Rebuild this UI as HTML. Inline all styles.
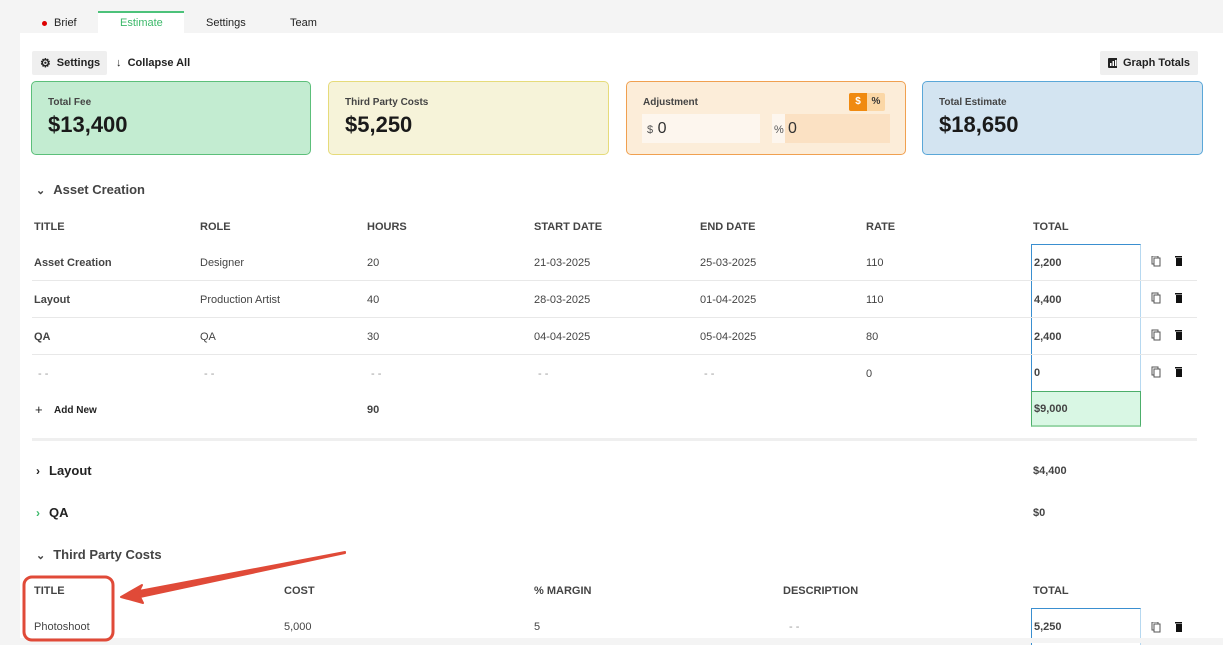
<!DOCTYPE html>
<html><head><meta charset="utf-8"><style>
*{margin:0;padding:0;box-sizing:border-box}
body{width:1223px;height:643px;background:#f4f4f4;font-family:"Liberation Sans",sans-serif;color:#333;position:relative;overflow:hidden}
.a{position:absolute;white-space:nowrap}
.main{position:absolute;left:20px;top:33px;width:1203px;height:605px;background:#fff}
.tab{position:absolute;top:17px;font-size:11px;color:#222}
.btn{position:absolute;background:#efefef;border-radius:2px;font-size:11px;font-weight:bold;color:#222;display:flex;align-items:center;gap:6px;padding:0 8px;white-space:nowrap}
.card{position:absolute;top:81px;height:74px;border-radius:5px;border:1px solid}
.card .l{position:absolute;left:16px;top:15px;font-size:10px;color:#444;font-weight:bold}
.card .v{position:absolute;left:16px;top:30px;font-size:22px;font-weight:bold;color:#1a1a1a}
.h{font-size:11px;font-weight:bold;color:#444}
.c{font-size:11px;color:#444}
.b{font-weight:bold}
.sep{position:absolute;left:32px;width:1165px;height:1px;background:#e8e8e8}
.tb{position:absolute;left:1031px;width:110px;border-left:1px solid #3a8fd0;border-right:1px solid #b6d8f0;background:#fff;font-size:11px;font-weight:bold;color:#444;padding-left:2px;display:flex;align-items:center}
.sec{font-size:13px;font-weight:bold;color:#222}
.t{margin-top:1px}
</style></head><body>
<div class="a" style="left:98px;top:11px;width:86px;height:22px;background:#fff;border-top:2px solid #4cc27a"></div>
<div class="a" style="left:42px;top:21px;width:5px;height:5px;border-radius:50%;background:#d00"></div>
<div class="tab a" style="left:54px;top:17px">Brief</div>
<div class="tab a" style="left:120px;color:#3cb96a">Estimate</div>
<div class="tab a" style="left:206px">Settings</div>
<div class="tab a" style="left:290px">Team</div>
<div class="main"></div>
<div class="btn" style="left:32px;top:51px;height:24px;width:75px"><span style="font-size:12px">⚙</span>Settings</div>
<div class="a" style="left:116px;top:57px;font-size:11px;font-weight:bold;color:#222">↓&nbsp; Collapse All</div>
<div class="btn" style="left:1100px;top:51px;height:24px;width:98px"><svg width="10" height="10"><rect x="0" y="0" width="10" height="10" rx="1" fill="#222"/><rect x="2" y="5" width="1.5" height="3" fill="#fff"/><rect x="4.5" y="3" width="1.5" height="5" fill="#fff"/><rect x="7" y="2" width="1.5" height="6" fill="#fff"/></svg>Graph Totals</div>

<div class="card" style="left:31px;width:280px;background:#c3ecd1;border-color:#5cbf7a"><div class="l">Total Fee</div><div class="v">$13,400</div></div>
<div class="card" style="left:328px;width:281px;background:#f6f3d9;border-color:#e6db7a"><div class="l">Third Party Costs</div><div class="v">$5,250</div></div>
<div class="card" style="left:626px;width:280px;background:#fcedd9;border-color:#f0a050">
 <div class="l">Adjustment</div>
 <div class="a" style="left:222px;top:11px;width:36px;height:18px;border-radius:2px;background:#fbd7a6;font-size:10px;font-weight:bold"><span class="a" style="left:0;top:0;width:18px;height:18px;background:#f08a10;color:#fff;text-align:center;line-height:18px;border-radius:2px 0 0 2px">$</span><span class="a" style="left:18px;width:18px;text-align:center;line-height:18px">%</span></div>
 <div class="a" style="left:15px;top:32px;width:118px;height:29px;background:#fdf6ee;font-size:16px;color:#333;line-height:29px;padding-left:5px"><span style="font-size:11px;color:#555">$</span> 0</div>
 <div class="a" style="left:145px;top:32px;width:118px;height:29px;background:#fdf6ee;font-size:16px;color:#333;line-height:29px;padding-left:2px"><span style="font-size:11px;color:#555">%</span><span class="a" style="left:13px;top:0;width:105px;height:29px;background:#fbe1c3;padding-left:3px">0</span></div>
</div>
<div class="card" style="left:922px;width:281px;background:#d3e4f1;border-color:#5aa7d8"><div class="l">Total Estimate</div><div class="v">$18,650</div></div>

<div class="a sec" style="left:36px;top:182px;color:#444"><span style="font-size:11px;margin-right:8px">&#8964;</span>Asset Creation</div>
<div class="a h" style="left:34px;top:221px">TITLE</div>
<div class="a h" style="left:200px;top:221px">ROLE</div>
<div class="a h" style="left:367px;top:221px">HOURS</div>
<div class="a h" style="left:534px;top:221px">START DATE</div>
<div class="a h" style="left:700px;top:221px">END DATE</div>
<div class="a h" style="left:866px;top:221px">RATE</div>
<div class="a h" style="left:1033px;top:221px">TOTAL</div>

<div class="tb" style="top:244px;height:37px;border-top:1px solid #3a8fd0">2,200</div>
<div class="tb" style="top:281px;height:37px">4,400</div>
<div class="tb" style="top:318px;height:37px">2,400</div>
<div class="tb" style="top:355px;height:36px">0</div>
<div class="tb" style="top:391px;height:36px;background:#d9f7e4;border:1px solid #4cae6a;border-bottom:2px solid #9bd7aa">$9,000</div>

<div class="sep" style="top:280px"></div><div class="sep" style="top:317px"></div><div class="sep" style="top:354px"></div>
<div class="a" style="left:32px;top:438px;width:1165px;height:3px;background:#efefef"></div>

<div class="a c b" style="left:34px;top:257px">Asset Creation</div><div class="a c" style="left:200px;top:257px">Designer</div><div class="a c" style="left:367px;top:257px">20</div><div class="a c" style="left:534px;top:257px">21-03-2025</div><div class="a c" style="left:700px;top:257px">25-03-2025</div><div class="a c" style="left:866px;top:257px">110</div>
<div class="a c b" style="left:34px;top:294px">Layout</div><div class="a c" style="left:200px;top:294px">Production Artist</div><div class="a c" style="left:367px;top:294px">40</div><div class="a c" style="left:534px;top:294px">28-03-2025</div><div class="a c" style="left:700px;top:294px">01-04-2025</div><div class="a c" style="left:866px;top:294px">110</div>
<div class="a c b" style="left:34px;top:331px">QA</div><div class="a c" style="left:200px;top:331px">QA</div><div class="a c" style="left:367px;top:331px">30</div><div class="a c" style="left:534px;top:331px">04-04-2025</div><div class="a c" style="left:700px;top:331px">05-04-2025</div><div class="a c" style="left:866px;top:331px">80</div>
<div class="a c" style="left:38px;top:368px;color:#999">- -</div><div class="a c" style="left:204px;top:368px;color:#999">- -</div><div class="a c" style="left:371px;top:368px;color:#999">- -</div><div class="a c" style="left:538px;top:368px;color:#999">- -</div><div class="a c" style="left:704px;top:368px;color:#999">- -</div><div class="a c" style="left:866px;top:368px">0</div>
<div class="a" style="left:35px;top:402px;font-size:13px;color:#222">+</div><div class="a c b" style="left:54px;top:405px;font-size:10px;color:#222">Add New</div>
<div class="a c b" style="left:367px;top:404px">90</div>

<svg class="a" style="left:1150px;top:256px" width="40" height="130">
<g id="ic"><rect x="2" y="0" width="6" height="8" fill="none" stroke="#555" stroke-width="1"/><rect x="4" y="2" width="6" height="8" fill="#fff" stroke="#555" stroke-width="1"/><rect x="25" y="0" width="7" height="1.5" fill="#111"/><rect x="26" y="2" width="6" height="8" fill="#111"/></g>
<use href="#ic" y="37"/><use href="#ic" y="74"/><use href="#ic" y="111"/>
</svg>

<div class="a sec" style="left:36px;top:463px"><span style="font-size:12px;margin-right:9px">›</span>Layout</div>
<div class="a c b" style="left:1033px;top:465px">$4,400</div>
<div class="a sec" style="left:36px;top:505px"><span style="font-size:12px;margin-right:9px;color:#3cb96a">›</span>QA</div>
<div class="a c b" style="left:1033px;top:507px">$0</div>
<div class="a sec" style="left:36px;top:547px;color:#444"><span style="font-size:11px;margin-right:8px">&#8964;</span>Third Party Costs</div>

<div class="a h" style="left:34px;top:585px">TITLE</div>
<div class="a h" style="left:284px;top:585px">COST</div>
<div class="a h" style="left:534px;top:585px">% MARGIN</div>
<div class="a h" style="left:783px;top:585px">DESCRIPTION</div>
<div class="a h" style="left:1033px;top:585px">TOTAL</div>
<div class="tb" style="top:608px;height:37px;border-top:1px solid #3a8fd0">5,250</div>
<div class="a c" style="left:34px;top:621px">Photoshoot</div>
<div class="a c" style="left:284px;top:621px">5,000</div>
<div class="a c" style="left:534px;top:621px">5</div>
<div class="a c" style="left:789px;top:621px;color:#999">- -</div>
<svg class="a" style="left:1150px;top:622px" width="40" height="12"><use href="#ic"/></svg>
<div class="a" style="left:0;top:638px;width:1223px;height:5px;background:#f4f4f4"></div>

<svg class="a" style="left:0;top:0" width="1223" height="643">
<rect x="24" y="577" width="89" height="63" rx="8" fill="none" stroke="#e04a38" stroke-width="3"/>
<polygon points="345,552 139,591 142,585 121,597 143,603 140,597 345,553" fill="#e04a38" stroke="#e04a38" stroke-width="2" stroke-linejoin="round"/>
</svg>
</body></html>
